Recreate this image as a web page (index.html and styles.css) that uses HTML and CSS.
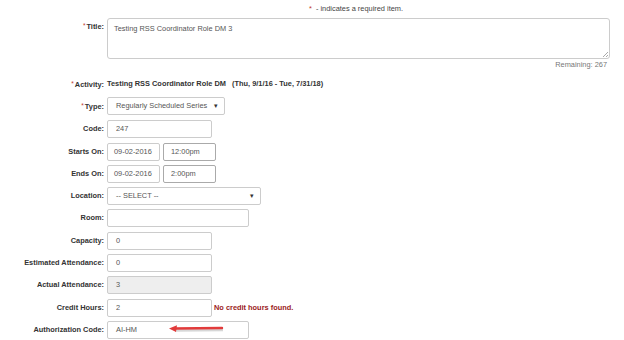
FILE: index.html
```html
<!DOCTYPE html>
<html>
<head>
<meta charset="utf-8">
<link rel="stylesheet" href="styles.css">
</head>
<body>
<div class="page">
  <div class="note"><span class="req">*</span> - indicates a required item.</div>
  <div class="title-row">
    <div class="label"><span class="req">*</span>Title:</div>
    <div class="textarea">Testing RSS Coordinator Role DM 3<span class="grip"></span></div>
  </div>
  <div class="remaining">Remaining: 267</div>
  <div class="activity-row">
    <div class="label"><span class="req">*</span>Activity:</div>
    <div class="value">Testing RSS Coordinator Role DM &nbsp;&nbsp;(Thu, 9/1/16 - Tue, 7/31/18)</div>
  </div>
  <div class="form">
    <div class="label"><span class="req">*</span>Type:</div>
    <div class="field"><div class="box select w-type">Regularly Scheduled Series<span class="caret">▾</span></div></div>

    <div class="label">Code:</div>
    <div class="field"><div class="box w-code">247</div></div>

    <div class="label">Starts On:</div>
    <div class="field"><div class="box w-date">09-02-2016</div><div class="box w-time dark">12:00pm</div></div>

    <div class="label">Ends On:</div>
    <div class="field"><div class="box w-date">09-02-2016</div><div class="box w-time dark">2:00pm</div></div>

    <div class="label">Location:</div>
    <div class="field"><div class="box select w-loc">-- SELECT --<span class="caret">▾</span></div></div>

    <div class="label">Room:</div>
    <div class="field"><div class="box w-room"></div></div>

    <div class="label">Capacity:</div>
    <div class="field"><div class="box w-code">0</div></div>

    <div class="label">Estimated Attendance:</div>
    <div class="field"><div class="box w-code">0</div></div>

    <div class="label">Actual Attendance:</div>
    <div class="field"><div class="box w-code disabled">3</div></div>

    <div class="label">Credit Hours:</div>
    <div class="field"><div class="box w-code">2</div><span class="error">No credit hours found.</span></div>

    <div class="label">Authorization Code:</div>
    <div class="field"><div class="box w-room">AI-HM</div>
      <svg class="arrow" width="58" height="10" viewBox="0 0 58 10">
        <line x1="6" y1="5" x2="54" y2="4.5" stroke="#b0b0b0" stroke-width="3" opacity="0.5" transform="translate(1,1.2)"/>
        <line x1="6" y1="4.5" x2="54" y2="4" stroke="#e23b3b" stroke-width="2.4" stroke-linecap="round"/>
        <polygon points="1,4.6 9,1.2 8,8" fill="#e23b3b"/>
      </svg>
    </div>
  </div>
</div>
</body>
</html>
```

FILE: styles.css
```css
* { box-sizing: border-box; }
html, body { margin: 0; padding: 0; background: #fff; }
body {
  font-family: "Liberation Sans", Arial, sans-serif;
  font-size: 7.4px;
  color: #333;
}
.page { width: 624px; height: 340px; overflow: hidden; position: relative; }
.req { color: #c0392b; font-weight: normal; font-size: 6.5px; vertical-align: 1px; margin-right: 1px; }
.note { padding: 4px 0 0 309px; height: 18px; line-height: 10px; color: #444; }
.note .req { font-size: 7.4px; vertical-align: 0; margin-right: 2px; }
.label { font-weight: bold; text-align: right; white-space: nowrap; }
.title-row { display: flex; gap: 3px; }
.title-row .label { width: 104px; padding-top: 4px; }
.textarea {
  position: relative;
  width: 503px; height: 41px;
  border: 1px solid #ccc; border-radius: 3px;
  padding: 5px 6px; color: #555;
}
.grip { position: absolute; right: 1px; bottom: 1px; width: 5px; height: 5px;
  background: linear-gradient(135deg, transparent 45%, #aaa 45%, #aaa 55%, transparent 55%, transparent 75%, #aaa 75%, #aaa 85%, transparent 85%); }
.remaining { text-align: right; width: 607px; color: #777; height: 10px; line-height: 10px; margin-top: 1px; }
.activity-row { display: flex; gap: 3px; margin-top: 8px; height: 12px; line-height: 12px; }
.activity-row .label { width: 104px; }
.activity-row .value { font-weight: bold; }
.form {
  display: grid;
  grid-template-columns: 104px 1fr;
  column-gap: 3px;
  row-gap: 4.3px;
  margin-top: 7px;
}
.form .label { line-height: 18px; }
.field { display: flex; align-items: center; gap: 3px; height: 18px; }
.box {
  height: 18px;
  border: 1px solid #ccc; border-radius: 2px;
  padding: 0 8px; line-height: 16px;
  color: #555; background: #fff;
  position: relative;
  white-space: nowrap;
}
.dark { border-color: #aaa; }
.disabled { background: #eee; }
.select { padding-left: 8px; }
.caret { position: absolute; right: 6px; top: 0; font-size: 7px; color: #333; }
.w-type { width: 118px; }
.w-code { width: 105px; }
.w-date { width: 53px; padding: 0 6px; }
.w-time { width: 53px; padding: 0 7px; }
.w-loc { width: 154px; }
.w-room { width: 142px; }
.error { color: #9a1b1b; font-weight: bold; margin-left: -1px; }
.arrow { position: absolute; left: 168px; top: 324px; }
```
